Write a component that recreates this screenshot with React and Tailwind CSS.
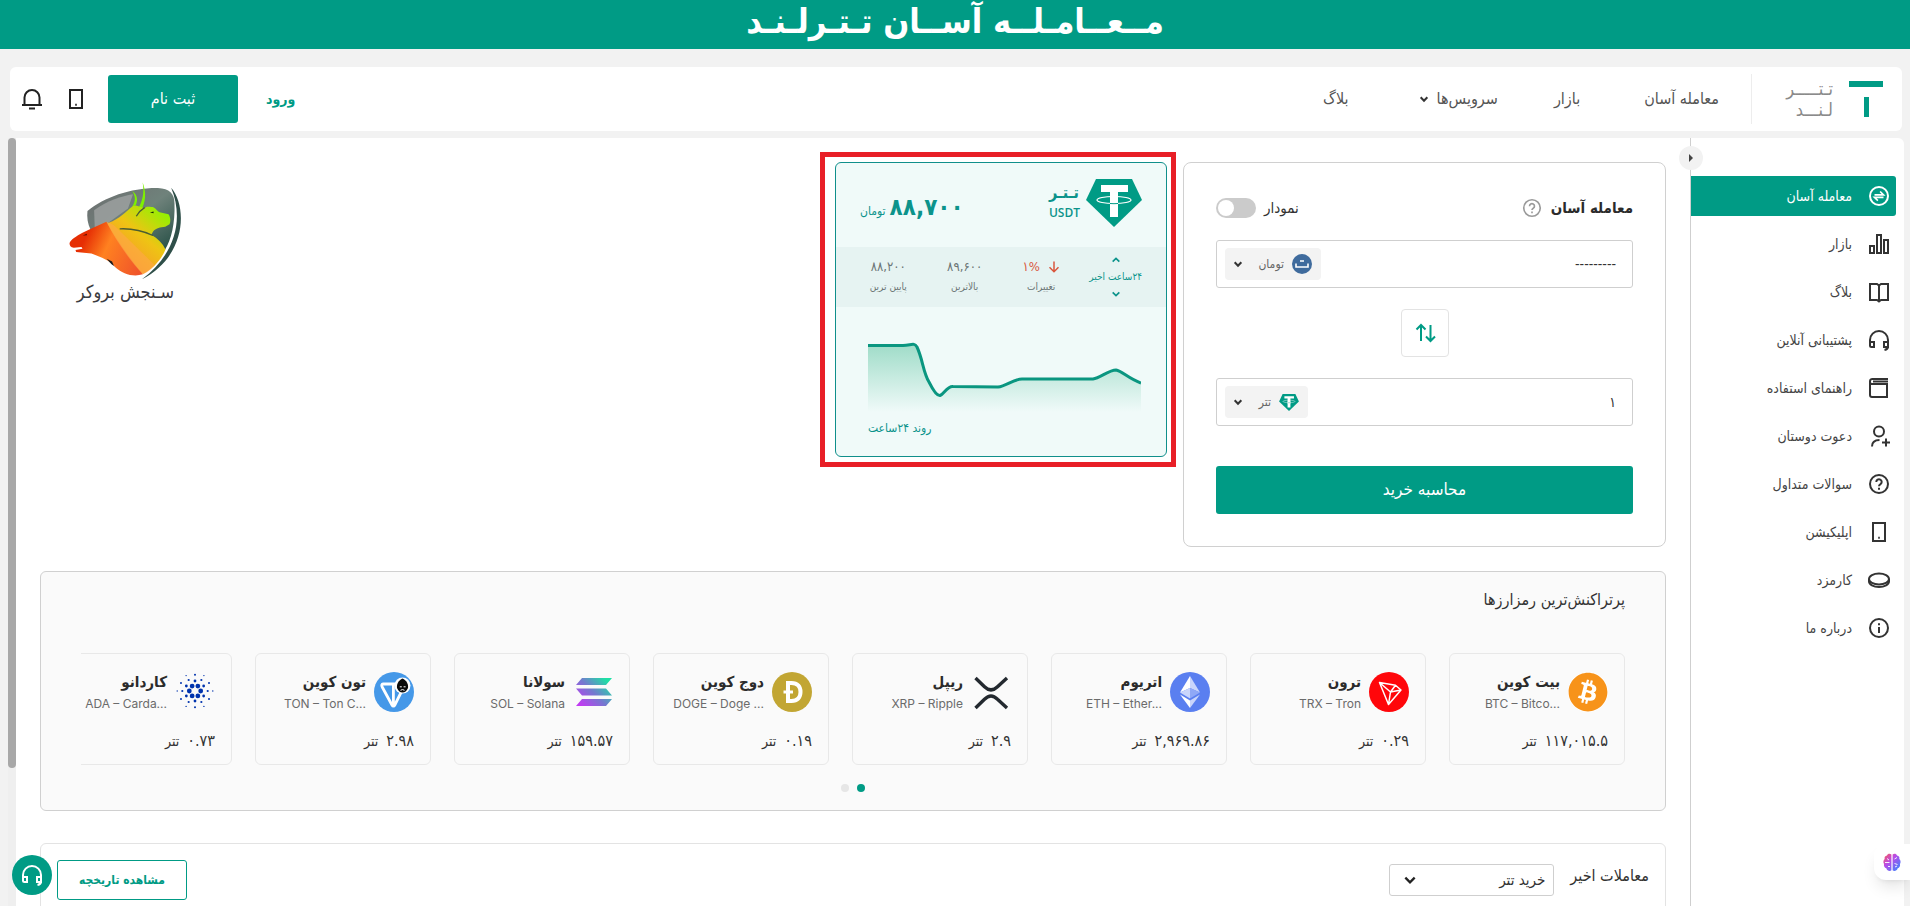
import React, { useState } from 'react';
import { FaBitcoin } from 'react-icons/fa';

// Ícones base em 24x24, traço reto
const Icon = ({ size = 24, width = 2, className = '', children }) => (
  <svg
    width={size}
    height={size}
    viewBox="0 0 24 24"
    fill="none"
    stroke="currentColor"
    strokeWidth={width}
    className={`shrink-0 ${className}`}
    aria-hidden="true"
  >
    {children}
  </svg>
);

const icons = {
  trade: (
    <>
      <circle cx="12" cy="12" r="9" />
      <path d="M7.5 10.8h9l-3.4-3.3M16.500 13.400h-9l3.400 3.300" strokeWidth="1.700" />
    </>
  ),
  bars: <path d="M3 14h4v7H3zM10 3h4v18h-4zM17 8h4v13h-4z" />,
  book: <path d="M3 4h7l2 1.500L14 4h7v16h-7l-2 1.500-2-1.500H3zM12 5v17" />,
  headset: (
    <path d="M3 18v-6a9 9 0 0 1 18 0v6.500c0 2-1 3-3.500 3.500M3 14h4v5H4.500A1.500 1.500 0 0 1 3 17.500zM21 14h-4v5h4z" />
  ),
  guide: <path d="M21 3H5.500A2.300 2.300 0 0 0 3 5.300V19a2 2 0 0 0 2 2h15V8H5.500A2 2 0 0 1 3 6M6 5.500h15" />,
  userPlus: (
    <>
      <circle cx="12" cy="7.500" r="5" />
      <path d="M5 22.500c0-4.500 3-6.500 7.500-6.500M19 14.500v8M15 18.500h8" />
    </>
  ),
  help: (
    <>
      <circle cx="12" cy="12" r="9" />
      <path d="M9.300 10a2.700 2.700 0 1 1 4.200 2.200c-1 .7-1.500 1-1.500 2.100M12 15.800v2" />
    </>
  ),
  phone: <path d="M6 3h12v18H6zM11.200 17.800h1.600" />,
  coin: (
    <>
      <ellipse cx="12" cy="11" rx="10" ry="5.500" />
      <path d="M2 11v2.500C2 16.500 6.500 19 12 19s10-2.500 10-5.500V11" />
    </>
  ),
  info: (
    <>
      <circle cx="12" cy="12" r="9" />
      <path d="M12 11v6M12 7.300v2" />
    </>
  ),
  bell: <path d="M2 18h20M4.500 18v-7.500a7.500 7.500 0 0 1 15 0V18M9 21.500h6" />,
  chevron: <path d="M4 8l8 8 8-8" />,
};

const menu = [
  { icon: 'trade', label: 'معامله آسان', active: true },
  { icon: 'bars', label: 'بازار' },
  { icon: 'book', label: 'بلاگ' },
  { icon: 'headset', label: 'پشتیبانی آنلاین' },
  { icon: 'guide', label: 'راهنمای استفاده' },
  { icon: 'userPlus', label: 'دعوت دوستان' },
  { icon: 'help', label: 'سوالات متداول' },
  { icon: 'phone', label: 'اپلیکیشن' },
  { icon: 'coin', label: 'کارمزد' },
  { icon: 'info', label: 'درباره ما' },
];

const TetherMark = ({ className }) => (
  <svg viewBox="0 0 56 48" className={className} aria-hidden="true">
    <path d="M10 0h36l10 21-28 27L0 21z" fill="#009b85" />
    <path d="M15 6h27v7H32v25h-8V13h-9z" fill="#fff" />
    <ellipse cx="28" cy="21" rx="17" ry="3.500" fill="none" stroke="#fff" strokeWidth="1.200" />
    <path d="M24 21h8v6h-8z" fill="#fff" />
    <path d="M24 24.500q4 .4 8 0" fill="none" stroke="#009b85" strokeWidth="1" />
  </svg>
);

const TomanMark = () => (
  <svg viewBox="0 0 20 20" className="size-5 shrink-0" aria-hidden="true">
    <circle cx="10" cy="10" r="10" fill="#3f6b9d" />
    <path d="M4 9.500V13h12V9.500M8 7h4" fill="none" stroke="#fff" strokeWidth="1.600" />
  </svg>
);

// Anéis de pontos do logotipo da Cardano: [raio do anel, raio do ponto, quantidade, ângulo inicial]
const cardanoRings = [
  [5.7, 2.4, 6, 0],
  [10, 1.4, 6, 30],
  [12.7, 1.1, 6, 0],
  [16.2, 1, 6, 30],
  [17.8, 0.7, 6, 0],
];

const coinLogos = {
  btc: (
    <span className="flex size-10 rounded-full bg-white">
      <FaBitcoin className="size-10 text-[#f7931a]" />
    </span>
  ),
  trx: (
    <svg viewBox="0 0 40 40" className="size-10">
      <circle cx="20" cy="20" r="20" fill="#ff060a" />
      <path
        d="M10.500 10.500L26.500 13.300 32 18 19.500 32.500zM10.500 10.500L21.500 20 19.500 32.500M21.500 20L32 18M21.500 20L26.500 13.300"
        fill="none"
        stroke="#fff"
        strokeWidth="1.500"
        strokeLinejoin="round"
      />
    </svg>
  ),
  eth: (
    <svg viewBox="0 0 40 40" className="size-10">
      <circle cx="20" cy="20" r="20" fill="#5a7ff0" />
      <path d="M20 4L10 20.500 20 16z" fill="#fff" />
      <path d="M20 4l10 16.500L20 16z" fill="#c9d5fb" />
      <path d="M20 16l-10 4.500 10 6z" fill="#c9d5fb" />
      <path d="M20 16l10 4.500-10 6z" fill="#8fa8f6" />
      <path d="M10 22.500l10 6V36z" fill="#fff" />
      <path d="M30 22.500l-10 6V36z" fill="#c9d5fb" />
    </svg>
  ),
  xrp: (
    <svg viewBox="0 0 40 40" className="size-10">
      <path
        d="M4.500 6L13.500 14.700Q20 21 26.500 14.700L36 6M4.500 36L13.500 27.200Q20 20.800 26.500 27.200L36 36"
        fill="none"
        stroke="#23292f"
        strokeWidth="3.400"
      />
    </svg>
  ),
  doge: (
    <svg viewBox="0 0 40 40" className="size-10">
      <circle cx="20" cy="20" r="20" fill="#c2a633" />
      <path d="M16 11v18h3.500c6 0 9-3.500 9-9s-3-9-9-9z" fill="none" stroke="#fff" strokeWidth="4" />
      <path d="M11.500 20H21" stroke="#fff" strokeWidth="3" />
    </svg>
  ),
  sol: (
    <svg viewBox="0 0 40 40" className="size-10">
      <defs>
        <linearGradient id="sol" x1="4" y1="36" x2="36" y2="4" gradientUnits="userSpaceOnUse">
          <stop offset="0.100" stopColor="#c13bf2" />
          <stop offset="0.500" stopColor="#7479cf" />
          <stop offset="0.900" stopColor="#1ee0a5" />
        </linearGradient>
      </defs>
      <path d="M9 6h30l-6 7H3zM3 16.500h30l6 7H9zM9 27h30l-6 7H3z" fill="url(#sol)" />
    </svg>
  ),
  ton: (
    <svg viewBox="0 0 40 40" className="size-10">
      <circle cx="20" cy="20" r="20" fill="#4598e8" />
      <path
        d="M9 12h19c2 0 2.500 1.500 1.800 3L20.800 33c-.8 1.500-2 1.500-2.800 0L8.200 15C7.300 13.500 7.800 12 9 12zM19.400 12v21"
        fill="none"
        stroke="#fff"
        strokeWidth="2.800"
      />
      <circle cx="28.500" cy="13.500" r="8" fill="#fff" />
      <path d="M28.500 6.500c-4 2-6 5.500-5.500 9.500 1.500 3 3 4.500 5.500 4.500s4-1.500 5.500-4.500c.5-4-1.500-7.500-5.500-9.500z" fill="#0b0b0b" />
      <path d="M25.800 14.800h2M29.600 14.800h2M26.500 18.300q2-1.500 4 0" stroke="#fff" strokeWidth="1" fill="none" />
    </svg>
  ),
  ada: (
    <svg viewBox="0 0 40 40" className="size-10">
      <g fill="#0033ad">
        {cardanoRings.map(([ring, dot, count, start]) =>
          Array.from({ length: count }, (_, i) => {
            const angle = ((start + (360 / count) * i) * Math.PI) / 180;
            return (
              <circle
                key={`${ring}-${i}`}
                cx={20 + ring * Math.cos(angle)}
                cy={19 + ring * Math.sin(angle)}
                r={dot}
              />
            );
          })
        )}
      </g>
    </svg>
  ),
};

const coins = [
  { id: 'btc', name: 'بیت کوین', code: 'BTC – Bitco...', price: '۱۱۷,۰۱۵.۵' },
  { id: 'trx', name: 'ترون', code: 'TRX – Tron', price: '۰.۲۹' },
  { id: 'eth', name: 'اتریوم', code: 'ETH – Ether...', price: '۲,۹۶۹.۸۶' },
  { id: 'xrp', name: 'ریپل', code: 'XRP – Ripple', price: '۲.۹' },
  { id: 'doge', name: 'دوج کوین', code: 'DOGE – Doge ...', price: '۰.۱۹' },
  { id: 'sol', name: 'سولانا', code: 'SOL – Solana', price: '۱۵۹.۵۷' },
  { id: 'ton', name: 'تون کوین', code: 'TON – Ton C...', price: '۲.۹۸' },
  { id: 'ada', name: 'کاردانو', code: 'ADA – Carda...', price: '۰.۷۳' },
];

// Escudo com urso e touro
const BrokerLogo = () => (
  <div className="ml-7 mt-5 flex flex-col items-center text-[#3b3b3f]">
    <svg width="115" height="98" viewBox="200 545 345 295" aria-hidden="true">
      <defs>
        <linearGradient id="shield" x1="0" y1="0" x2="1" y2="1">
          <stop offset="0" stopColor="#6d6d6f" />
          <stop offset="0.500" stopColor="#6f827b" />
          <stop offset="1" stopColor="#1f4a40" />
        </linearGradient>
        <linearGradient id="bull" x1="500" y1="600" x2="330" y2="800" gradientUnits="userSpaceOnUse">
          <stop offset="0.100" stopColor="#8cf500" />
          <stop offset="0.500" stopColor="#eec414" />
          <stop offset="0.900" stopColor="#f9942b" />
        </linearGradient>
        <linearGradient id="bear" x1="205" y1="700" x2="420" y2="800" gradientUnits="userSpaceOnUse">
          <stop offset="0.200" stopColor="#e62e04" />
          <stop offset="0.500" stopColor="#ff8120" />
          <stop offset="1" stopColor="#f0552a" />
        </linearGradient>
      </defs>
      <path d="M258 632C310 590 390 562 470 563 505 565 520 580 520 610 522 670 510 720 492 748L400 760 268 690C258 670 256 650 258 632z" fill="url(#shield)" />
      <path d="M278 630C320 600 360 588 395 582L380 625 325 665 280 685z" fill="#a5a8a8" opacity="0.700" />
      {/* Chifres */}
      <path d="M392 620C404 602 403 588 393 572 408 584 411 598 403 616zM406 634C424 604 430 580 424 546 436 578 434 604 418 634z" fill="#7ef000" />
      <path
        d="M322 668C355 656 374 634 394 618L404 616 430 624C438 616 445 622 455 620 464 624 470 634 475 636L502 642C508 650 509 665 505 672L492 680C476 682 466 684 456 693L450 704C470 716 484 730 493 748 478 782 455 806 425 822L330 760 300 680z"
        fill="url(#bull)"
      />
      <path d="M405 648C412 635 420 628 430 622M355 686C395 684 425 692 455 706" fill="none" stroke="#4a5c33" strokeWidth="4" />
      <path d="M446 637l11-3v5z" fill="#132c08" />
      <path
        d="M204 729C206 720 225 708 243 698L262 689 315 665C340 710 380 770 425 823 395 832 365 822 340 800 325 780 295 770 270 760L224 756 222 750 243 746 240 741 217 743C207 741 204 736 204 729z"
        fill="url(#bear)"
      />
      <path d="M315 665C325 668 335 672 345 682L460 795C450 808 440 816 425 823 385 780 345 725 315 665z" fill="#ffa94a" opacity="0.600" />
      <path d="M244 706l12-5v4z" fill="#4a0c02" />
      <path d="M316 776q14 18 22 22l-6-14z" fill="#1b1b1b" />
      <path d="M510 562C560 620 555 770 422 838 520 765 550 660 510 562z" fill="#2f4f49" />
    </svg>
    <span className="text-lg leading-6 whitespace-nowrap">سـنجش بروکر</span>
  </div>
);

const CurrencyField = ({ label, value, onChange, mark, unit, chipClass }) => (
  <div className="flex h-12 items-center rounded-[3px] border border-[#cfcfcf] pl-2 pr-4">
    <input
      aria-label={label}
      value={value}
      onChange={onChange}
      className="h-8 min-w-0 flex-1 bg-transparent text-sm text-[#333] outline-none"
    />
    <div className={`relative flex h-8 items-center rounded bg-[#f3f3f3] pr-[9px] ${chipClass}`}>
      {mark}
      <select
        aria-label={`${label} - ${unit}`}
        className="h-8 min-w-0 flex-1 appearance-none bg-transparent pr-2 text-xs leading-8 text-[#666] outline-none"
      >
        <option>{unit}</option>
      </select>
      <Icon size={10} width={5} className="pointer-events-none absolute left-2 text-[#333]">
        {icons.chevron}
      </Icon>
    </div>
  </div>
);

const Stat = ({ value, label }) => (
  <div className="flex w-20 flex-col items-center gap-1 text-[#6b7575]">
    <span className="text-[13px] leading-4">{value}</span>
    <span className="text-[10px] leading-4">{label}</span>
  </div>
);

const TetherCard = () => (
  <div className="h-[315px] w-[356px] border-5 border-[#e81f27] py-[5px] pl-[10px] pr-1">
    <div className="flex h-[295px] flex-col overflow-hidden rounded-md border border-[#108f8b] bg-[#f0faf9]">
      <div className="flex h-[84px] items-start justify-between pl-6 pr-6 pt-4">
        <div className="flex gap-1.5">
          <TetherMark className="h-12 w-14" />
          <div className="flex flex-col items-end pt-0.5 text-[#0c938b]">
            <span className="text-base font-bold leading-6">تـتـر</span>
            <span className="font-['Open_Sans'] text-xs font-semibold leading-4">USDT</span>
          </div>
        </div>
        <div className="flex items-baseline gap-1 pt-3 text-[#0c938b]">
          <span className="text-2xl font-bold leading-8">۸۸,۷۰۰</span>
          <span className="text-xs">تومان</span>
        </div>
      </div>

      <div className="flex h-[60px] items-center bg-[#e6f3f2] px-[14px]">
        <div className="flex w-[76px] flex-col items-center text-[#0c938b]">
          <button type="button" aria-label="بازه بعدی">
            <Icon size={10} width={4} className="rotate-180">{icons.chevron}</Icon>
          </button>
          <span className="text-[10px] leading-6 whitespace-nowrap">۲۴ساعت اخیر</span>
          <button type="button" aria-label="بازه قبلی">
            <Icon size={10} width={4}>{icons.chevron}</Icon>
          </button>
        </div>
        <Stat
          value={
            <span className="flex items-center gap-2 text-[#d9573f]">
              <Icon size={12} width={3}><path d="M12 1v20M3 12.500l9 9 9-9" /></Icon>
              <span dir="ltr">۱%</span>
            </span>
          }
          label="تغییرات"
        />
        <Stat value="۸۹,۶۰۰" label="بالاترین" />
        <Stat value="۸۸,۲۰۰" label="پایین ترین" />
      </div>

      <div className="flex flex-1 flex-col pl-8 pr-[25px] pt-[33px]">
        <svg viewBox="0 0 273 72" className="h-[72px] w-full" preserveAspectRatio="none" aria-hidden="true">
          <defs>
            <linearGradient id="trend" x1="0" y1="0" x2="0" y2="1">
              <stop offset="0" stopColor="#9fdcc8" />
              <stop offset="1" stopColor="#f0faf9" />
            </linearGradient>
          </defs>
          <path
            d="M0 5.500H35C43 5.500 46 2 49 7 55 20 55 32 61 42 65 50 69 56 72 55.500 76 54 79 46 85 46.500L130 47C138 46 146 39 154 39H225C232 38 241 30 248 30 254 31 261 39 273 43V72H0z"
            fill="url(#trend)"
          />
          <path
            d="M0 5.500H35C43 5.500 46 2 49 7 55 20 55 32 61 42 65 50 69 56 72 55.500 76 54 79 46 85 46.500L130 47C138 46 146 39 154 39H225C232 38 241 30 248 30 254 31 261 39 273 43"
            fill="none"
            stroke="#0a9680"
            strokeWidth="3"
          />
        </svg>
        <span className="self-end pt-1 text-xs leading-6 text-[#0c938b]">روند ۲۴ساعت</span>
      </div>
    </div>
  </div>
);

const TradeCard = () => {
  const [amount, setAmount] = useState('---------');
  const [tether, setTether] = useState('۱');
  return (
    <div className="w-[483px] rounded-lg border border-[#d0d0d0] px-8 pb-8 pt-[25px]">
      <div className="flex h-10 items-center justify-between">
        <div className="flex items-center gap-2">
          <h1 className="text-[15px] font-bold text-[#2b2b2b]">معامله آسان</h1>
          <Icon size={22} width={1.8} className="text-[#9a9a9a]">{icons.help}</Icon>
        </div>
        <label className="flex cursor-pointer items-center gap-2 text-[15px] text-[#333]">
          نمودار
          <input type="checkbox" className="peer sr-only" />
          <span className="flex h-5 w-10 items-center justify-end rounded-full bg-[#cbcbcb] p-0.5 peer-checked:justify-start peer-checked:bg-[#009b85]">
            <span className="size-4 rounded-full bg-white" />
          </span>
        </label>
      </div>

      <div className="mt-3">
        <CurrencyField
          label="مبلغ پرداختی"
          value={amount}
          onChange={(e) => setAmount(e.target.value)}
          mark={<TomanMark />}
          unit="تومان"
          chipClass="w-24"
        />
      </div>
      <div className="flex justify-center py-[21px]">
        <button
          type="button"
          aria-label="جابجایی"
          className="flex size-12 items-center justify-center rounded border border-[#e3e3e3] text-[#009b85]"
        >
          <Icon size={24} width={2}><path d="M8 20V4M3.500 8.500L8 4l4.500 4.500M17.500 4v16M13 15.500l4.500 4.500 4.500-4.500" /></Icon>
        </button>
      </div>
      <CurrencyField
        label="مقدار دریافتی"
        value={tether}
        onChange={(e) => setTether(e.target.value)}
        mark={<TetherMark className="h-[17px] w-5 shrink-0" />}
        unit="تتر"
        chipClass="w-[83px]"
      />
      <button type="button" className="mt-10 h-12 w-full rounded-[3px] bg-[#009b85] text-[17px] font-medium text-white">
        محاسبه خرید
      </button>
    </div>
  );
};

const Header = () => (
  <header className="ml-[10px] mr-2 mt-[18px] flex h-16 shrink-0 items-center rounded-md bg-white pl-4 pr-[19px] text-[#555]">
    <a href="#" aria-label="تترلند" className="flex items-center gap-4">
      <svg width="34" height="36" viewBox="0 0 34 36" aria-hidden="true">
        <path d="M0 0h34v6H0zM15 16h5v20h-5z" fill="#009b85" />
      </svg>
      <span className="flex w-[53px] flex-col text-lg leading-[21px] whitespace-nowrap text-[#8a8a8a]">
        <span>تـتـــــر</span>
        <span>لـنـــد</span>
      </span>
    </a>
    <nav className="mr-7 flex h-[50px] items-center border-r border-[#ededed] pr-8 text-base">
      <a href="#trade">معامله آسان</a>
      <a href="#market" className="mr-16">بازار</a>
      <a href="#services" className="mr-14 flex items-center gap-2">
        سرویس‌ها
        <Icon size={10} width={5} className="text-[#333]">{icons.chevron}</Icon>
      </a>
      <a href="#blog" className="mr-[70px]">بلاگ</a>
    </nav>
    <div className="mr-auto flex items-center">
      <a href="#login" className="ml-7 text-sm font-bold text-[#009b85]">ورود</a>
      <button type="button" className="h-12 w-[130px] rounded-[3px] bg-[#009b85] text-base font-medium text-white">
        ثبت نام
      </button>
      <button type="button" aria-label="اپلیکیشن" className="mr-5 text-[#222]">
        <Icon>{icons.phone}</Icon>
      </button>
      <button type="button" aria-label="اعلان‌ها" className="-ml-1.5 mr-5 text-[#222]">
        <Icon>{icons.bell}</Icon>
      </button>
    </div>
  </header>
);

const Sidebar = () => (
  <aside className="relative w-[214px] shrink-0 border-l border-[#cfcfcf] pt-[38px]">
    <button
      type="button"
      aria-label="بستن منو"
      className="absolute -left-3 top-2 flex size-6 items-center justify-center rounded-full bg-[#f2f2f2]"
    >
      <svg width="4" height="8" viewBox="0 0 4 8" aria-hidden="true">
        <path d="M0 0l4 4-4 4z" fill="#444" />
      </svg>
    </button>
    <nav className="mr-2 flex flex-col gap-2">
      {menu.map((item) => (
        <a
          key={item.label}
          href={`#${item.icon}`}
          className={
            item.active
              ? 'flex h-10 items-center gap-[15px] rounded-r-[3px] bg-[#009b85] pr-[5px] text-sm font-medium text-white'
              : 'flex h-10 items-center gap-[15px] pr-[5px] text-sm text-[#444]'
          }
        >
          <Icon className={item.active ? 'text-white' : 'text-[#333]'}>{icons[item.icon]}</Icon>
          {item.label}
        </a>
      ))}
    </nav>
  </aside>
);

const CoinCard = ({ coin }) => (
  <li className="flex h-28 w-44 shrink-0 flex-col justify-between rounded-md border border-[#e8e8e8] pb-[11px] pl-2 pr-4 pt-4">
    <div className="flex h-11 items-center gap-2">
      {coinLogos[coin.id]}
      <div className="flex min-w-0 flex-col items-start">
        <span className="text-[15px] font-bold leading-6 text-[#2b2b2b]">{coin.name}</span>
        <span dir="ltr" className="font-['Inter'] text-[12px] leading-5 whitespace-nowrap text-[#6b6b6b]">
          {coin.code}
        </span>
      </div>
    </div>
    <div className="flex items-baseline gap-2 text-[#333]">
      <span className="text-base leading-6">{coin.price}</span>
      <span className="text-sm leading-6">تتر</span>
    </div>
  </li>
);

const TopCoins = () => (
  <section className="mt-6 h-60 shrink-0 rounded-md border border-[#d0d0d0] bg-[#fafafa] px-10 pt-4">
    <h2 className="text-base leading-6 text-[#333]">پرتراکنش‌ترین رمزارزها</h2>
    <ul className="mt-[41px] flex gap-[23px] overflow-hidden">
      {coins.map((coin) => (
        <CoinCard key={coin.id} coin={coin} />
      ))}
    </ul>
    <div className="mt-[19px] flex justify-center gap-2">
      <button type="button" aria-label="صفحه ۱" className="size-2 rounded-full bg-[#009b85]" />
      <button type="button" aria-label="صفحه ۲" className="size-2 rounded-full bg-[#e6e6e6]" />
    </div>
  </section>
);

const RecentTrades = () => (
  <section className="mt-8 h-40 shrink-0 rounded-md border border-[#e3e3e3] px-4 pt-4">
    <div className="flex items-start justify-between">
      <div className="flex items-start gap-4 pt-1">
        <label htmlFor="history" className="text-base leading-6 text-[#333]">معاملات اخیر</label>
        <div className="relative flex items-center">
          <select
            id="history"
            className="h-8 w-[165px] appearance-none rounded-[3px] border border-[#cfcfcf] bg-white pr-2 pl-8 text-[15px] text-[#333]"
          >
            <option>خرید تتر</option>
          </select>
          <Icon size={14} width={4} className="pointer-events-none absolute left-3.5 text-[#222]">
            {icons.chevron}
          </Icon>
        </div>
      </div>
      <button
        type="button"
        className="h-10 w-[130px] rounded-[3px] border border-[#009b85] text-xs font-bold text-[#009b85]"
      >
        مشاهده تاریخچه
      </button>
    </div>
  </section>
);

// Atalho lateral com o cérebro em duas metades
const BrainTab = () => (
  <button
    type="button"
    aria-label="دستیار"
    className="fixed bottom-[26px] right-0 flex h-9 w-9 items-center justify-center rounded-l-xl bg-white shadow-lg"
  >
    <svg width="18" height="19" viewBox="0 0 18 19" aria-hidden="true">
      <defs>
        <linearGradient id="brain" x1="0" y1="0" x2="1" y2="1">
          <stop offset="0" stopColor="#ff5a4f" />
          <stop offset="0.400" stopColor="#b94be8" />
          <stop offset="1" stopColor="#2f8cff" />
        </linearGradient>
      </defs>
      <path
        d="M8.400 1.500C7 .3 4.500.6 4 2.500 2 2.600 1.200 4.500 1.700 6 .2 7.200 0 9.500 1 11c-.4 2 .6 3.800 2.300 4.300C4 18 7 18.500 8.400 17.300zM9.600 1.500c1.400-1.200 3.900-.9 4.400 1 2 .1 2.800 2 2.300 3.500 1.500 1.200 1.700 3.500.7 5 .4 2-.6 3.800-2.300 4.300-.7 2.700-3.700 3.200-5.100 2z"
        fill="url(#brain)"
      />
      <path d="M2 9.500h4.500M4 5.500l2 1.500M5 13.500h2M11.500 6l2.500-1.500M11.500 10.500l3 1M12 14l2-1" stroke="#fff" strokeWidth="0.900" />
    </svg>
  </button>
);

export default function App() {
  return (
    <div
      dir="rtl"
      className="flex h-screen flex-col overflow-hidden bg-[#f2f2f2] font-['DejaVu_Sans_Condensed','DejaVu_Sans',sans-serif]"
    >
      <div className="flex h-[49px] shrink-0 items-center justify-center bg-[#009b85] pb-2">
        <span className="text-[34px] font-bold leading-10 whitespace-nowrap text-white">
          مــعــامـلــه آســان تـتـرلـنـد
        </span>
      </div>

      <Header />

      <div className="ml-2 mr-[6px] mt-[7px] flex min-h-0 flex-1 rounded-t-md bg-white">
        <Sidebar />
        <main className="flex min-w-0 flex-1 flex-col overflow-hidden px-6">
          <div className="mt-[14px] flex items-start">
            <div className="mt-[10px]">
              <TradeCard />
            </div>
            <div className="mr-[7px]">
              <TetherCard />
            </div>
            <div className="mr-auto mt-[10px]">
              <BrokerLogo />
            </div>
          </div>
          <TopCoins />
          <RecentTrades />
        </main>
        {/* Barra de rolagem */}
        <div className="w-2 shrink-0 bg-[#efefef]">
          <div className="h-[82%] rounded bg-[#a8a8a8]" />
        </div>
      </div>

      <button
        type="button"
        aria-label="پشتیبانی آنلاین"
        className="fixed bottom-[11px] left-3 flex size-10 items-center justify-center rounded-full bg-[#009b85] text-white"
      >
        <Icon>{icons.headset}</Icon>
      </button>
      <BrainTab />
    </div>
  );
}
